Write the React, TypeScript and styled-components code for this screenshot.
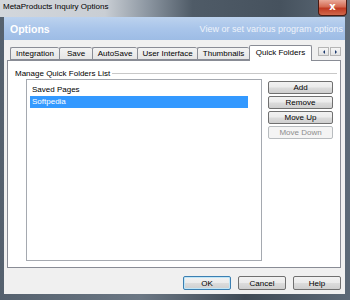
import React from "react";
import styled, { createGlobalStyle } from "styled-components";

const tabs = [
  { label: "Integration", width: 49 },
  { label: "Save", width: 33 },
  { label: "AutoSave", width: 45 },
  { label: "User Interface", width: 60 },
  { label: "Thumbnails", width: 52 },
  { label: "Quick Folders", width: 63, active: true },
];

const folders = [
  { name: "Saved Pages" },
  { name: "Softpedia", selected: true },
];

const sideButtons = [
  { label: "Add" },
  { label: "Remove" },
  { label: "Move Up" },
  { label: "Move Down", disabled: true },
];

const GlobalStyle = createGlobalStyle`
  html, body {
    margin: 0;
    padding: 0;
    background: #4d5966;
  }
  body {
    font-family: "Liberation Sans", Arial, sans-serif;
    font-size: 8px;
    color: #000;
  }
`;

export default function App() {
  return (
    <>
      <GlobalStyle />
      <Window>
        <TitleBar>
          <TitleText>MetaProducts Inquiry Options</TitleText>
          <CloseButton>x</CloseButton>
        </TitleBar>

        <Client>
          <Header>
            <HeaderTitle>Options</HeaderTitle>
            <HeaderSub>View or set various program options</HeaderSub>
          </Header>

          <TabArea>
            <TabStrip>
              {tabs.map((t) => (
                <Tab key={t.label} $active={!!t.active} style={{ width: t.width }}>
                  {t.label}
                </Tab>
              ))}
              <ScrollArrows>
                <ArrowButton>
                  <ArrowLeft />
                </ArrowButton>
                <ArrowButton>
                  <ArrowRight />
                </ArrowButton>
              </ScrollArrows>
            </TabStrip>

            <TabPane>
              <Group>
                <GroupLegend>
                  <span>Manage Quick Folders List</span>
                  <LegendLine />
                </GroupLegend>
                <GroupBody>
                  <ListBox>
                    {folders.map((f) => (
                      <ListItem key={f.name} $selected={!!f.selected}>
                        {f.name}
                      </ListItem>
                    ))}
                  </ListBox>
                  <SideButtons>
                    {sideButtons.map((b) => (
                      <PushButton key={b.label} disabled={b.disabled}>
                        {b.label}
                      </PushButton>
                    ))}
                  </SideButtons>
                </GroupBody>
              </Group>
            </TabPane>
          </TabArea>

          <Footer>
            <FooterButton $focused>OK</FooterButton>
            <FooterButton>Cancel</FooterButton>
            <FooterButton>Help</FooterButton>
          </Footer>
        </Client>
      </Window>
    </>
  );
}

const Window = styled.div`
  width: 350px;
  height: 300px;
  display: flex;
  flex-direction: column;
  background: linear-gradient(90deg, #55616e 0%, #6b7784 40%, #3f4a55 70%, #5d6a78 100%);
  overflow: hidden;
`;

const TitleBar = styled.div`
  height: 17px;
  flex-shrink: 0;
  display: flex;
  align-items: flex-start;
  padding-left: 3px;
  padding-right: 3px;
  background: linear-gradient(
    90deg,
    #d3d7dc 0%,
    #c9ced4 30%,
    #8d97a2 42%,
    #4f5b67 55%,
    #46525e 80%,
    #5e6b78 100%
  );
`;

const TitleText = styled.span`
  font-size: 8px;
  line-height: 14px;
  color: #000;
`;

const CloseButton = styled.div`
  margin-left: auto;
  width: 29px;
  height: 16px;
  box-sizing: border-box;
  border: 1px solid #4a1a12;
  border-top: none;
  border-radius: 0 0 4px 4px;
  background: linear-gradient(#e9a999 0%, #d46a52 45%, #c03a22 55%, #d0684c 100%);
  color: #fff;
  font-family: "DejaVu Sans", sans-serif;
  font-weight: bold;
  font-size: 10px;
  line-height: 13px;
  text-align: center;
`;

const Client = styled.div`
  flex: 1;
  display: flex;
  flex-direction: column;
  margin: 0 5px 6px 4px;
  background: #f0f0f0;
  min-height: 0;
`;

const Header = styled.div`
  height: 23px;
  flex-shrink: 0;
  display: flex;
  align-items: center;
  justify-content: space-between;
  padding: 0 2px 0 6px;
  background: linear-gradient(#bcd2ee 0%, #a9c5ea 50%, #9dbce5 100%);
`;

const HeaderTitle = styled.span`
  color: #fff;
  font-weight: bold;
  font-size: 10.5px;
`;

const HeaderSub = styled.span`
  color: #eef3fa;
  font-size: 9px;
`;

const TabArea = styled.div`
  flex: 1;
  display: flex;
  flex-direction: column;
  padding: 5px 4px 0 3px;
  min-height: 0;
`;

const TabStrip = styled.div`
  height: 16px;
  display: flex;
  align-items: flex-end;
  padding-left: 3px;
  position: relative;
  z-index: 1;
`;

const Tab = styled.div<{ $active: boolean }>`
  box-sizing: border-box;
  height: ${(p) => (p.$active ? "16px" : "13px")};
  margin-bottom: ${(p) => (p.$active ? "0" : "1px")};
  border: 1px solid #898c95;
  border-right: ${(p) => (p.$active ? "1px solid #898c95" : "none")};
  border-bottom: ${(p) => (p.$active ? "none" : "1px solid #898c95")};
  border-radius: 2px 2px 0 0;
  background: ${(p) => (p.$active ? "#fff" : "linear-gradient(#f3f3f3, #e5e5e5)")};
  display: flex;
  align-items: center;
  justify-content: center;
  padding-bottom: ${(p) => (p.$active ? "2px" : "0")};
  white-space: nowrap;
  font-size: 8px;
  & + & {
    margin-left: 0;
  }
`;

const ScrollArrows = styled.div`
  margin-left: auto;
  align-self: flex-start;
  margin-top: 2px;
  display: flex;
  gap: 1px;
`;

const ArrowButton = styled.div`
  width: 11px;
  height: 9px;
  box-sizing: border-box;
  border: 1px solid #b5b5b5;
  background: linear-gradient(#f6f6f6, #e2e2e2);
  display: flex;
  align-items: center;
  justify-content: center;
`;

const ArrowLeft = styled.span`
  width: 0;
  height: 0;
  border-top: 2px solid transparent;
  border-bottom: 2px solid transparent;
  border-right: 2px solid #1c3a6e;
`;

const ArrowRight = styled.span`
  width: 0;
  height: 0;
  border-top: 2px solid transparent;
  border-bottom: 2px solid transparent;
  border-left: 2px solid #1c3a6e;
`;

const TabPane = styled.div`
  flex: 1;
  margin-top: -1px;
  border: 1px solid #898c95;
  background: #fff;
  padding: 7px 3px 6px 5px;
  display: flex;
  min-height: 0;
`;

const Group = styled.div`
  flex: 1;
  display: flex;
  flex-direction: column;
`;

const GroupLegend = styled.div`
  height: 10px;
  display: flex;
  align-items: center;
  gap: 2px;
  padding-left: 2px;
  white-space: nowrap;
`;

const LegendLine = styled.div`
  flex: 1;
  height: 1px;
  background: #c8c8c8;
`;

const GroupBody = styled.div`
  flex: 1;
  display: flex;
  gap: 6px;
  padding: 1px 4px 0 13px;
`;

const ListBox = styled.div`
  width: 236px;
  box-sizing: border-box;
  border: 1px solid #a5a9b0;
  background: #fff;
  padding: 4px 0 0 3px;
`;

const ListItem = styled.div<{ $selected: boolean }>`
  width: 218px;
  height: 12px;
  line-height: 12px;
  padding-left: 2px;
  box-sizing: border-box;
  background: ${(p) => (p.$selected ? "#3399ff" : "transparent")};
  color: ${(p) => (p.$selected ? "#fff" : "#000")};
`;

const SideButtons = styled.div`
  width: 65px;
  display: flex;
  flex-direction: column;
  gap: 2px;
  padding-top: 2px;
`;

const PushButton = styled.div<{ disabled?: boolean }>`
  height: 13px;
  box-sizing: border-box;
  border: 1px solid ${(p) => (p.disabled ? "#b8bcbf" : "#707070")};
  border-radius: 2px;
  background: ${(p) =>
    p.disabled
      ? "#f4f4f4"
      : "linear-gradient(#f2f2f2 0%, #ebebeb 48%, #dcdcdc 52%, #cfcfcf 100%)"};
  color: ${(p) => (p.disabled ? "#8d8d8d" : "#000")};
  display: flex;
  align-items: center;
  justify-content: center;
  font-size: 8px;
`;

const Footer = styled.div`
  height: 26px;
  flex-shrink: 0;
  display: flex;
  justify-content: flex-end;
  gap: 7px;
  padding: 8px 4px 0 0;
  box-sizing: border-box;
`;

const FooterButton = styled.div<{ $focused?: boolean }>`
  width: 48px;
  height: 14px;
  box-sizing: border-box;
  border: 1px solid ${(p) => (p.$focused ? "#3c7fb1" : "#707070")};
  border-radius: 2px;
  box-shadow: ${(p) => (p.$focused ? "inset 0 0 0 1px #bfe6f8" : "none")};
  background: linear-gradient(#f2f2f2 0%, #ebebeb 48%, #dcdcdc 52%, #cfcfcf 100%);
  display: flex;
  align-items: center;
  justify-content: center;
  font-size: 8px;
`;
